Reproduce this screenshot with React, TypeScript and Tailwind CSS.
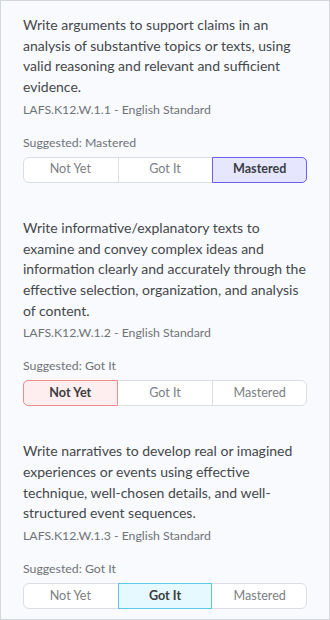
import React from "react";

type Level = "Not Yet" | "Got It" | "Mastered";

type Standard = {
  id: string;
  text: string;
  code: string;
  suggested: Level;
  selected: Level;
};

const STANDARDS: Standard[] = [
  {
    id: "1",
    text: "Write arguments to support claims in an analysis of substantive topics or texts, using valid reasoning and relevant and sufficient evidence.",
    code: "LAFS.K12.W.1.1 - English Standard",
    suggested: "Mastered",
    selected: "Mastered",
  },
  {
    id: "2",
    text: "Write informative/explanatory texts to examine and convey complex ideas and information clearly and accurately through the effective selection, organization, and analysis of content.",
    code: "LAFS.K12.W.1.2 - English Standard",
    suggested: "Got It",
    selected: "Not Yet",
  },
  {
    id: "3",
    text: "Write narratives to develop real or imagined experiences or events using effective technique, well-chosen details, and well-structured event sequences.",
    code: "LAFS.K12.W.1.3 - English Standard",
    suggested: "Got It",
    selected: "Got It",
  },
];

const LEVELS: Level[] = ["Not Yet", "Got It", "Mastered"];

// selected look per level
const ACTIVE: Record<Level, string> = {
  "Not Yet": "bg-[#ffeef0] border-[#f08c8e] font-bold text-[#3a3d40]",
  "Got It": "bg-[#e6f9fe] border-[#5cc8e6] font-bold text-[#3a3d40]",
  Mastered: "bg-[#e6e6ff] border-[#6d5df0] font-bold text-[#3a3d40]",
};

function LevelPicker({ selected }: { selected: Level }) {
  return (
    <div className="mr-px flex h-[26px] rounded-[6px] border border-[#d9dee6] bg-white">
      {LEVELS.map((l, i) => {
        const on = l === selected;
        const edge =
          i === 0 ? "rounded-l-[5px]" : i === 2 ? "rounded-r-[5px]" : "";
        const divider = i > 0 && !on && LEVELS[i - 1] !== selected ? "border-l-[#d9dee6]" : "";
        return (
          <button
            key={l}
            className={`-my-px flex flex-1 items-center justify-center border text-[12.6px] ${edge} ${
              on
                ? ACTIVE[l]
                : `border-transparent text-[#7b8084] ${divider}`
            } ${i === 0 ? "-ml-px" : ""} ${i === 2 ? "-mr-px" : ""}`}
          >
            {l}
          </button>
        );
      })}
    </div>
  );
}

export default function App() {
  return (
    <div
      className="flex h-[620px] w-full flex-col gap-[35px] border border-[#d3d8df] bg-[#f9fafe] pl-[22px] pr-[21px] pt-[14px] text-[#45484b]"
      style={{ fontFamily: "Lato, 'Noto Sans', sans-serif" }}
    >
      {STANDARDS.map((s) => (
        <section key={s.id}>
          <p className="text-[14px] leading-[20.7px]">{s.text}</p>
          <p className="mt-[2px] text-[12.3px] leading-[20px] text-[#6e7376]">{s.code}</p>
          <p className="mt-[13px] text-[12.3px] leading-[20px] text-[#6e7376]">
            Suggested: {s.suggested}
          </p>
          <div className="mt-[4px]">
            <LevelPicker selected={s.selected} />
          </div>
        </section>
      ))}
    </div>
  );
}
